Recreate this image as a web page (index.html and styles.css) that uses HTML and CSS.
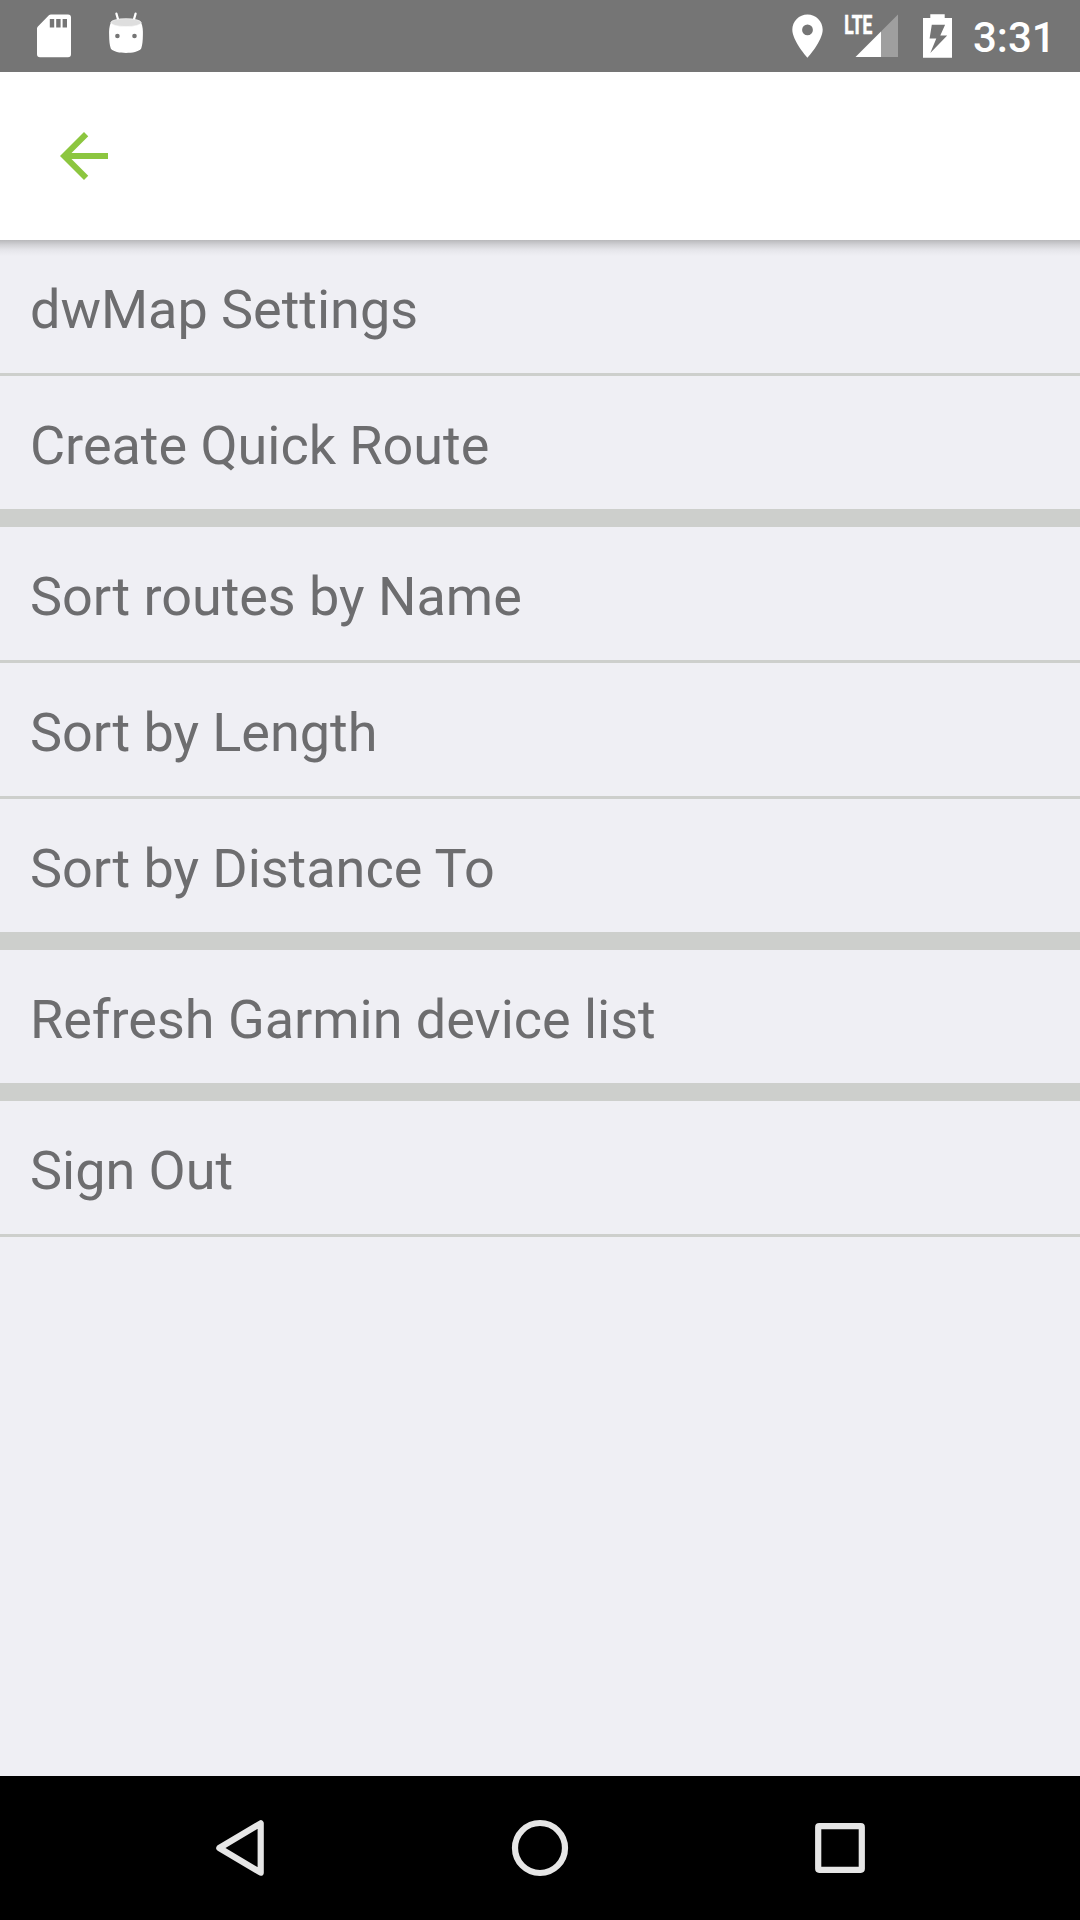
FILE: index.html
```html
<!DOCTYPE html>
<html lang="en">
<head>
<meta charset="utf-8">
<title>Settings</title>
<link rel="stylesheet" href="styles.css">
</head>
<body>
<div class="screen">
  <header class="status">
    <div class="status-group">
      <svg class="sd" width="34" height="44" viewBox="37 14 34 44"><path fill="#fff" fill-rule="evenodd" d="M51 14.4H68a3 3 0 0 1 3 3V54.3a3 3 0 0 1-3 3H40a3 3 0 0 1-3-3V28.500a3 3 0 0 1 .9-2.100L48.900 15.300a3 3 0 0 1 2.100-.9ZM49.800 19v8.500h4.400V19ZM56.200 19v8.500h4.400V19ZM62.600 19v8.500H67V19Z"/></svg>
      <svg class="droid" width="36" height="42" viewBox="108 12 36 42"><path fill="none" stroke="#fff" stroke-width="2.200" stroke-linecap="round" d="M116.400 13.600l2 7M135.600 13.600l-2 7"/><path fill="#fff" d="M111 22C109 27 109 31 109.100 34.500 109.200 41 109.600 45 110.800 48.500 113 51.800 120 52.900 126 52.900S139 51.800 141.200 48.500C142.400 45 142.800 41 142.900 34.500 143 31 143 27 141 22Z"/><ellipse cx="126" cy="22.600" rx="15.200" ry="4" fill="#dedede" stroke="#fff" stroke-width=".5"/><circle cx="117.400" cy="36" r="2.300" fill="#757575"/><circle cx="134.500" cy="36" r="2.300" fill="#757575"/></svg>
    </div>
    <div class="status-group">
      <svg class="pin" width="32" height="44" viewBox="791 14 32 44"><path fill="#fff" fill-rule="evenodd" d="M807.500 14.400C799.100 14.400 792.300 21.200 792.300 29.600 792.300 41 807.500 57.800 807.500 57.800S822.700 41 822.700 29.600C822.700 21.200 815.900 14.400 807.500 14.400ZM807.500 24.500a5.400 5.400 0 1 1 0 10.800 5.400 5.400 0 0 1 0-10.800Z"/></svg>
      <svg class="signal" width="54" height="44" viewBox="845 14 54 44"><path fill="#9f9f9f" d="M881 31.500 898 14.400V57H881Z"/><path fill="#fff" d="M855.500 57 881 31.500V57Z"/><text class="lte" x="844.300" y="33.500" textLength="28" lengthAdjust="spacingAndGlyphs">LTE</text></svg>
      <svg class="battery" width="30" height="44" viewBox="923 14 30 44"><path fill="#fff" fill-rule="evenodd" d="M930.300 14.200H944.700V18H952V57.800H923V18H930.300ZM931.800 24.800 929.600 38.600H936.300L930.300 53 947.200 35.600H940.300L945.100 24.800Z"/></svg>
      <span class="clock">3:31</span>
    </div>
  </header>
  <div class="toolbar">
    <svg width="72" height="72" viewBox="0 0 24 24"><path fill="#8cc63f" d="M20 11H7.830l5.590-5.590L12 4l-8 8 8 8 1.410-1.410L7.830 13H20v-2z"/></svg>
  </div>
  <main class="menu">
    <div class="item">dwMap Settings</div>
    <div class="item group-end">Create Quick Route</div>
    <div class="item">Sort routes by Name</div>
    <div class="item">Sort by Length</div>
    <div class="item group-end">Sort by Distance To</div>
    <div class="item group-end">Refresh Garmin device list</div>
    <div class="item">Sign Out</div>
  </main>
  <nav class="navbar">
    <svg width="60" height="60" viewBox="210 1818 60 60"><path d="M260.700 1823.300V1872.700L219.300 1848Z"/></svg>
    <svg width="60" height="60" viewBox="510 1818 60 60"><circle cx="540" cy="1848" r="25"/></svg>
    <svg width="60" height="60" viewBox="810 1818 60 60"><rect x="818.200" y="1826.200" width="43.600" height="43.600" rx="1"/></svg>
  </nav>
</div>
</body>
</html>
```
FILE: styles.css
```css
body {
  margin: 0;
  font-family: Roboto, sans-serif;
}

.screen {
  display: flex;
  flex-direction: column;
  width: 1080px;
  height: 1920px;
  background: #efeff4;
  overflow: hidden;
}

.status {
  display: flex;
  justify-content: space-between;
  height: 72px;
  padding: 0 30px 0 37px;
  box-sizing: border-box;
  background: #757575;
}

.status-group {
  display: flex;
  align-items: flex-start;
}

.status svg {
  margin-top: 14px;
  overflow: visible;
}

.status .droid {
  margin-top: 12px;
  margin-left: 37px;
}

.signal {
  margin-left: 22px;
}

.battery {
  margin-left: 24px;
}

.lte {
  font: 700 26px Roboto, sans-serif;
  fill: #fff;
  stroke: #fff;
  stroke-width: 0.7px;
}

.clock {
  width: 77px;
  margin-left: 20px;
  font-size: 42px;
  font-weight: 500;
  line-height: 75px;
  color: #fff;
  white-space: nowrap;
}

.toolbar {
  display: flex;
  align-items: center;
  height: 168px;
  padding-left: 48px;
  background: #fff;
}

.menu {
  flex: 1;
  background: linear-gradient(#b8b8bb, #d2d2d6 5px, #e5e5ea 10px, #efeff4 16px);
}

.item {
  height: 130px;
  padding: 3px 0 0 30px;
  line-height: 133px;
  font-size: 54px;
  letter-spacing: -0.03px;
  color: #6d6d6f;
  border-bottom: 3px solid #cdcfcc;
}

.group-end {
  border-bottom-width: 18px;
}

.navbar {
  display: flex;
  justify-content: center;
  align-items: center;
  gap: 240px;
  height: 144px;
  background: #000;
}

.navbar svg {
  fill: none;
  stroke: #e6e6e6;
  stroke-width: 6.2px;
  stroke-linejoin: round;
}
```
